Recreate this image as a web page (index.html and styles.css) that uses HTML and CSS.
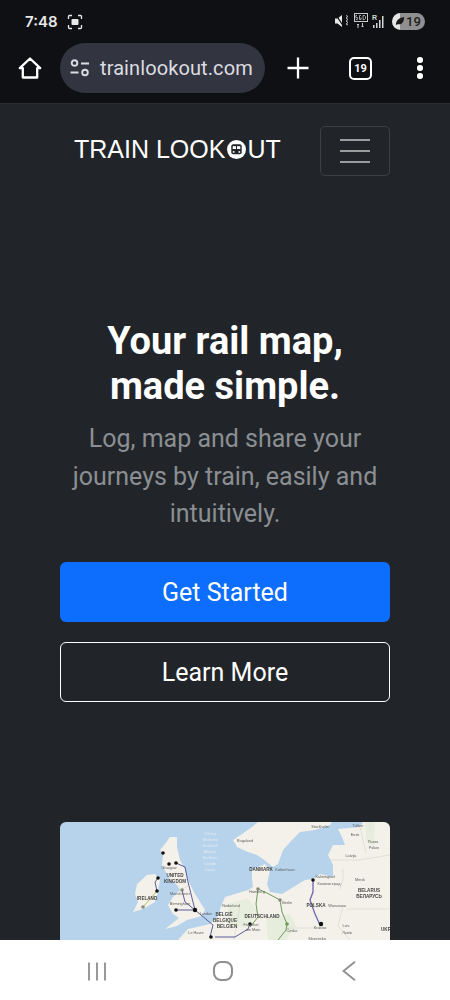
FILE: index.html
```html
<!DOCTYPE html>
<html lang="en">
<head>
  <meta charset="UTF-8">
  <meta name="viewport" content="width=device-width, initial-scale=1.0">
  <title>Train Lookout</title>
  <link rel="stylesheet" href="styles.css">
</head>
<body>
  <div class="browser-top">
    <div class="status-bar">
      <div class="status-left">
        <span class="clock">7:48</span>
        <svg class="shot-icon" width="16" height="16" viewBox="0 0 16 16" fill="none" stroke="#e8e8e8" stroke-width="1.3">
          <path d="M1.500 5V2.500a1 1 0 0 1 1-1H5M11 1.500h2.500a1 1 0 0 1 1 1V5M14.500 11v2.500a1 1 0 0 1-1 1H11M5 14.500H2.500a1 1 0 0 1-1-1V11"/>
          <rect x="4.500" y="5" width="7" height="6" rx="1" fill="#e8e8e8" stroke="none"/>
        </svg>
      </div>
      <div class="status-right">
        <svg width="15" height="14" viewBox="0 0 15 14" fill="#e8e8e8">
          <path d="M0 4.500h2.500L7 1v12L2.500 9.500H0z"/>
          <path d="M1 1l8 12" stroke="#0f1014" stroke-width="1.300"/>
          <path d="M11 1.500l2 1-2 1.500 2 1.500-2 1.500 2 1.500-2 1.500 2 1" fill="none" stroke="#bbb" stroke-width="1"/>
        </svg>
        <svg width="14" height="16" viewBox="0 0 14 16" fill="none" stroke="#c9c9c9" stroke-width="1">
          <rect x="0.500" y="0.500" width="13" height="8"/>
          <path d="M3 2.500H1.800v2h1.500v2H1.800M7 2.500H5.500v4H7V4.500M9 2.500v4h1.500l1-1v-2l-1-1z" stroke-width="0.800"/>
          <path d="M4 15v-4M3 12l1-1 1 1M8.500 10v4M7.500 13l1 1 1-1"/>
        </svg>
        <svg width="14" height="15" viewBox="0 0 14 15" fill="#d5d5d5">
          <text x="0" y="6" class="roam-letter">R</text>
          <rect x="1" y="11" width="1.500" height="3"/>
          <rect x="4" y="9" width="1.500" height="5"/>
          <rect x="7" y="6" width="1.500" height="8"/>
          <rect x="10" y="2" width="1.500" height="12"/>
        </svg>
        <div class="battery">
          <svg width="10" height="10" viewBox="0 0 11 11" fill="#1a1a1a">
            <path d="M1 10c0-5 3-8 9-9 0 6-3 9-7 8z"/>
          </svg>
          <span>19</span>
        </div>
      </div>
    </div>
    <div class="toolbar">
      <svg class="tool-icon" width="24" height="24" viewBox="0 0 24 24" fill="none" stroke="#fff" stroke-width="2.300" stroke-linejoin="round">
        <path d="M1.800 12.200L12 2.500l10.200 9.700h-3v9.300H4.800v-9.300z"/>
      </svg>
      <div class="url-pill">
        <svg width="20" height="18" viewBox="0 0 20 18" fill="none" stroke="#dcdde2" stroke-width="1.900">
          <circle cx="4.500" cy="4" r="2.800"/>
          <path d="M11 4.500h8M0.500 13.500h8"/>
          <circle cx="15" cy="13.500" r="2.800"/>
        </svg>
        <span>trainlookout.com</span>
      </div>
      <svg class="tool-icon plus" width="22" height="22" viewBox="0 0 22 22" stroke="#fff" stroke-width="2.300">
        <path d="M11 0.500v21M0.500 11h21"/>
      </svg>
      <div class="tab-count">19</div>
      <div class="dots"><i></i><i></i><i></i></div>
    </div>
  </div>

  <main class="page">
    <nav class="site-nav">
      <a class="logo">TRAIN LOOK<svg class="logo-o" width="19" height="19" viewBox="0 0 20 20">
          <circle cx="10" cy="10" r="10" fill="#fff"/>
          <rect x="4.500" y="4.500" width="11" height="10.500" rx="2" fill="#212529"/>
          <rect x="6" y="6.500" width="3.500" height="3" fill="#fff"/>
          <rect x="10.500" y="6.500" width="3.500" height="3" fill="#fff"/>
          <circle cx="7" cy="12.500" r="1" fill="#fff"/>
          <circle cx="13" cy="12.500" r="1" fill="#fff"/>
        </svg>UT</a>
      <button class="toggler" aria-label="Menu"><i></i><i></i><i></i></button>
    </nav>

    <section class="hero">
      <h1>Your rail map,<br>made simple.</h1>
      <p class="lead">Log, map and share your journeys by train, easily and intuitively.</p>
      <a class="btn btn-primary">Get Started</a>
      <a class="btn btn-outline">Learn More</a>
    </section>

    <div class="map-card">
      <svg width="330" height="118" viewBox="0 0 330 118">
        <rect width="330" height="118" fill="#b7d3ec"/>
        <g fill="#f3f1e9">
          <!-- great britain -->
          <path d="M110 15L117 15 117 25 120 38 125 47 128 58 135 72 142 83 145 88 142 94 127 98 117 104 105 107 119 96 113 92 108 83 113 75 120 68 117 63 110 57 107 52 102 43 103 33 100 28 105 22z"/>
          <!-- ireland -->
          <path d="M77 62L87 53 95 52 100 58 98 70 95 80 83 87 73 90 78 80 75 72z"/>
          <!-- mainland europe -->
          <path d="M118 118L128 107 150 102 160 92 160 87 165 75 175 72 188 68 193 65 192 57 192 48 205 42 210 48 207 62 210 70 222 72 245 58 253 57 260 52 273 55 273 43 268 33 273 23 285 23 282 15 278 7 300 5 303 0H330V118z"/>
          <!-- scandinavia -->
          <path d="M198 0L192 5 182 12 173 18 177 25 188 30 197 33 203 37 213 45 218 42 223 28 232 18 240 10 255 8 270 3 272 0z"/>
        </g>
        <g fill="#e3ecd9" opacity="0.700">
          <path d="M168 82l20-6 10 14-12 16-18-4z"/>
          <path d="M305 0h10l-1 24-8-4z"/>
          <path d="M206 96l24-4 6 12-10 14h-18z"/>
        </g>
        <g fill="none" stroke="#cfccc3" stroke-width="0.500">
          <path d="M269 38l30 0 31-5M283 47l0 10-3 10M283 84l-5 20 12 14M287 87h43M180 84l-6 34M226 106l30 0"/>
          <path d="M120 68l8-4M300 5l6 26"/>
        </g>
        <g fill="none" stroke-width="1" stroke-linejoin="round">
          <path d="M116 41L125 45 128 60 135 88M122 68L125 80 135 88M116 88H135M98 56L95 60 97 69M135 88L153 103 150 115" stroke="#5b5b9c"/>
          <path d="M253 58L253 70 250 78 255 92 260 103" stroke="#6b68ad" stroke-width="1.300"/>
          <path d="M198 67L196 82 198 95 190 105M198 67L207 71 220 78 222 90 227 102 226 108 218 118" stroke="#6e9a5e"/>
          <path d="M155 115L175 115 188 107 190 102" stroke="#5b5b9c"/>
          <path d="M97 69L83 85" stroke="#b6bf6a"/>
        </g>
        <g fill="#111">
          <circle cx="103" cy="31" r="1.800"/><circle cx="109" cy="42" r="1.800"/>
          <circle cx="116" cy="41" r="1.800"/><circle cx="98" cy="56" r="1.800"/>
          <circle cx="97" cy="69" r="1.800"/><circle cx="116" cy="88" r="1.800"/>
          <circle cx="135" cy="88" r="2.200"/><circle cx="151" cy="115" r="1.800"/>
          <circle cx="190" cy="102" r="1.800"/><circle cx="253" cy="58" r="1.800"/>
          <circle cx="261" cy="102" r="2.200"/>
        </g>
        <g fill="#8a8a7f">
          <circle cx="198" cy="67" r="1.800"/><circle cx="220" cy="78" r="1.800"/>
          <circle cx="122" cy="68" r="1.800"/><circle cx="83" cy="85" r="1.800"/>
        </g>
        <circle cx="227" cy="102" r="1.800" fill="#6e9a5e"/>
        <g class="map-label strong">
          <text x="115" y="55">UNITED</text>
          <text x="115" y="61">KINGDOM</text>
          <text x="87" y="78">IRELAND</text>
          <text x="164" y="94">BELGIË</text>
          <text x="165" y="100">BELGIQUE</text>
          <text x="167" y="106">BELGIEN</text>
          <text x="202" y="96">DEUTSCHLAND</text>
          <text x="201" y="48.500">DANMARK</text>
          <text x="256" y="85">POLSKA</text>
          <text x="309" y="70">BELARUS</text>
          <text x="309" y="76">БЕЛАРУСЬ</text>
          <text x="326" y="109">UKR</text>
        </g>
        <g class="map-label">
          <text x="109" y="46.500">Glasgow</text>
          <text x="120" y="72.500">Manchester</text>
          <text x="120" y="82.500">Birmingham</text>
          <text x="146" y="92.500">London</text>
          <text x="136" y="111.500">Le Havre</text>
          <text x="171" y="84.500">Nederland</text>
          <text x="191" y="103.500">Frankfurt</text>
          <text x="193" y="109">am Main</text>
          <text x="225" y="48.500">København</text>
          <text x="197" y="71">Hamburg</text>
          <text x="227" y="81.500">Berlin</text>
          <text x="232" y="110">Česko</text>
          <text x="265" y="55.500">Kaliningrad</text>
          <text x="269" y="62.500">Калининград</text>
          <text x="277" y="85">Warszawa</text>
          <text x="260" y="106.500">Kraków</text>
          <text x="291" y="35">Latvija</text>
          <text x="300" y="59">Minsk</text>
          <text x="298" y="4.500">Tallinn</text>
          <text x="295" y="13.500">Eesti</text>
          <text x="313" y="21">Псков</text>
          <text x="314" y="27">Pskov</text>
          <text x="260" y="5.500">Stockholm</text>
          <text x="185" y="19.500">Rogaland</text>
          <text x="286" y="105">Lviv</text>
          <text x="287" y="111.500">Львів</text>
          <text x="257" y="117.500">Slovensko</text>
        </g>
        <g class="map-label sea">
          <text x="150" y="13">Orkney</text>
          <text x="150" y="19">Shetland</text>
          <text x="150" y="25">Scotland</text>
          <text x="150" y="31">Atlantic</text>
          <text x="150" y="37">Northern</text>
          <text x="150" y="43">Islands</text>
          <text x="150" y="49">Coast</text>
        </g>
      </svg>
    </div>
  </main>

  <div class="android-nav">
    <svg width="20" height="19" viewBox="0 0 20 19" stroke="#8e8e8e" stroke-width="1.800">
      <path d="M2 0.500v18M10 0.500v18M18 0.500v18"/>
    </svg>
    <svg class="nav-home" width="20" height="20" viewBox="0 0 20 20" fill="none" stroke="#8e8e8e" stroke-width="2">
      <rect x="1" y="1" width="18" height="18" rx="7"/>
    </svg>
    <svg width="14" height="20" viewBox="0 0 14 20" fill="none" stroke="#8e8e8e" stroke-width="1.800">
      <path d="M13 0.800L1.500 10 13 19.200"/>
    </svg>
  </div>
</body>
</html>
```

FILE: styles.css
```css
* {
  box-sizing: border-box;
}

body {
  font-family: Roboto, sans-serif;
  background-color: #212529;
  margin: 0;
  height: 1000px;
  display: flex;
  flex-direction: column;
  overflow: hidden;
}

.browser-top {
  background: #0f1014;
  height: 104px;
  border-bottom: 1px solid #2b2e33;
  flex-shrink: 0;
}

.status-bar {
  height: 43px;
  padding: 12px 25px 0 25px;
  display: flex;
  justify-content: space-between;
  align-items: flex-start;
}

.status-left {
  display: flex;
  align-items: center;
  gap: 9px;
}

.clock {
  color: #e8e8e8;
  font-family: Inter, sans-serif;
  font-size: 15px;
  font-weight: 600;
  line-height: 19px;
}

.status-right {
  display: flex;
  align-items: center;
  gap: 4px;
  height: 18px;
}

.roam-letter {
  font-family: "Liberation Sans", sans-serif;
  font-size: 7px;
  font-weight: 700;
}

.battery {
  width: 33px;
  height: 17px;
  margin-left: 2px;
  border-radius: 9px;
  background: linear-gradient(90deg, #e6e6e6 0 8px, #8f8f8f 8px);
  display: flex;
  align-items: center;
  gap: 1px;
  padding-left: 3px;
  color: #1d1d1d;
  font-size: 13px;
  font-weight: 500;
}

.toolbar {
  height: 50px;
  padding: 0 0 0 18px;
  display: flex;
  align-items: center;
}

.url-pill {
  width: 205px;
  height: 50px;
  margin-left: 18px;
  border-radius: 25px;
  background: #32343f;
  display: flex;
  align-items: center;
  gap: 10px;
  padding-left: 10px;
  color: #dcdde2;
  font-size: 20px;
  letter-spacing: 0.1px;
}

.plus {
  margin-left: 22px;
}

.tab-count {
  width: 23px;
  height: 23px;
  margin-left: 40px;
  border: 2.5px solid #fff;
  border-radius: 5px;
  color: #fff;
  font-size: 11px;
  font-weight: 700;
  display: flex;
  align-items: center;
  justify-content: center;
}

.dots {
  margin-left: 45px;
  display: flex;
  flex-direction: column;
  gap: 2.5px;
}

.dots i {
  display: block;
  width: 5.5px;
  height: 5.5px;
  border-radius: 50%;
  background: #fff;
}

.page {
  flex: 1;
  overflow: hidden;
  padding: 0 60px;
}

.site-nav {
  display: flex;
  justify-content: space-between;
  align-items: center;
  padding-top: 22px;
}

.logo {
  margin-left: 14px;
  padding-bottom: 4px;
  color: #fff;
  font-family: "Liberation Sans", sans-serif;
  font-size: 25px;
  display: flex;
  align-items: center;
}

.logo-o {
  margin: 0 1px 0 2px;
}

.toggler {
  width: 70px;
  height: 50px;
  background: none;
  border: 1px solid rgba(255, 255, 255, 0.12);
  border-radius: 5px;
  padding: 0 19px;
  display: flex;
  flex-direction: column;
  justify-content: center;
  gap: 9px;
}

.toggler i {
  display: block;
  height: 2px;
  background: rgba(255, 255, 255, 0.55);
}

.hero {
  text-align: center;
  padding-top: 143px;
}

h1 {
  margin: 0;
  color: #fff;
  font-size: 38px;
  font-weight: 700;
  line-height: 45px;
}

.lead {
  margin: 11px 0 29px;
  color: #8b8f93;
  font-size: 25px;
  font-weight: 400;
  line-height: 37.5px;
}

.btn {
  display: block;
  height: 60px;
  padding-top: 1px;
  border-radius: 6px;
  color: #fff;
  font-size: 25px;
  line-height: 60px;
  margin-bottom: 20px;
}

.btn-primary {
  background: #0d6efd;
}

.btn-outline {
  border: 1px solid #fff;
  line-height: 58px;
}

.map-card {
  margin-top: 120px;
  height: 118px;
  border-radius: 6px 6px 0 0;
  overflow: hidden;
}

.map-card svg {
  display: block;
  filter: blur(0.4px);
}

.map-label text {
  font-family: "Liberation Sans", sans-serif;
  font-size: 3.8px;
  text-anchor: middle;
  fill: #5c5c5c;
}

.map-label.strong text {
  font-size: 4.6px;
  font-weight: 700;
  fill: #444;
}

.map-label.sea text {
  fill: #dfeaf5;
}

.android-nav {
  height: 60px;
  flex-shrink: 0;
  background: #fff;
  display: flex;
  align-items: center;
  justify-content: space-between;
  padding: 2px 94px 0 87px;
}

.nav-home {
  margin-right: 3px;
}
```
